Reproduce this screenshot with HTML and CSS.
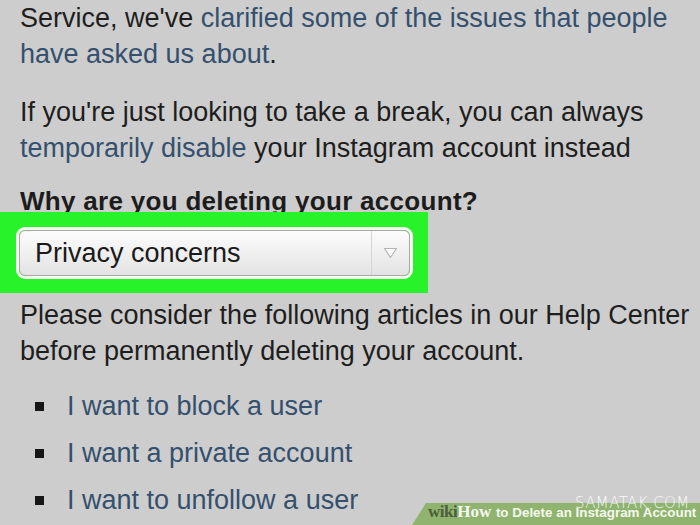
FILE: index.html
```html
<!DOCTYPE html>
<html lang="en">
<head>
<meta charset="utf-8">
<title>Delete Your Account</title>
<link rel="stylesheet" href="styles.css">
</head>
<body>
<main class="page">
  <p class="para">Service, we've <a class="link" href="#">clarified some of the issues that people<br>have asked us about</a>.</p>
  <p class="para">If you're just looking to take a break, you can always<br><a class="link" href="#">temporarily disable</a> your Instagram account instead</p>
  <h2 class="question">Why are you deleting your account?</h2>
  <div class="highlight">
    <div class="select">
      <span class="select-value">Privacy concerns</span>
      <span class="select-arrow">
        <svg width="15" height="12" viewBox="0 0 15 12"><path d="M1.5 1.5 L7.5 10.5 L13.5 1.5 Z" fill="#f9f9f9" stroke="#b4b4b4" stroke-width="1.1" stroke-linejoin="round"/></svg>
      </span>
    </div>
  </div>
  <p class="para para-help">Please consider the following articles in our Help Center<br>before permanently deleting your account.</p>
  <ul class="articles">
    <li><a class="link" href="#">I want to block a user</a></li>
    <li><a class="link" href="#">I want a private account</a></li>
    <li><a class="link" href="#">I want to unfollow a user</a></li>
  </ul>
</main>
<div class="banner">
  <span class="banner-text"><span class="wiki">wiki</span><span class="how">How</span> to Delete an Instagram Account</span>
</div>
<span class="mark">SAMATAK.COM</span>
</body>
</html>
```

FILE: styles.css
```css
html, body {
  margin: 0;
  padding: 0;
}

body {
  width: 700px;
  height: 525px;
  overflow: hidden;
  background: #cdcdcd;
  font-family: "Liberation Sans", Arial, sans-serif;
  color: #1e1e1e;
  position: relative;
}

.page {
  padding: 0 20px;
}

.para {
  margin: 0;
  font-size: 27px;
  line-height: 36px;
  letter-spacing: 0;
  white-space: nowrap;
}

.para + .para {
  margin-top: 22px;
}

.link {
  color: #35506e;
  text-decoration: none;
}

.question {
  margin: 20px 0 0;
  font-size: 26px;
  line-height: 30px;
  font-weight: bold;
  letter-spacing: 0.3px;
  color: #1c1c1c;
  white-space: nowrap;
}

/* bright marker box around the reason picker */
.highlight {
  margin: -4px 0 0 -20px;
  width: 391px;
  padding: 18px 18px 17px 19px;
  background: #27f22a;
  position: relative;
}

.select {
  display: flex;
  align-items: stretch;
  height: 44px;
  border: 1px solid #a9a9a9;
  border-radius: 6px;
  background: linear-gradient(#fcfcfc, #e3e3e3);
  box-shadow: 0 0 0 3px #f4fff2;
}

.select-value {
  flex: 1;
  display: flex;
  align-items: center;
  padding-left: 15px;
  font-size: 27px;
  color: #1a1a1a;
}

.select-arrow {
  width: 37px;
  display: flex;
  align-items: center;
  justify-content: center;
  border-left: 1px solid #d4d4d4;
}

.para-help {
  margin-top: 4px;
}

.articles {
  list-style: none;
  margin: 14px 0 0;
  padding: 0 0 0 15px;
}

.articles li {
  display: flex;
  align-items: center;
  font-size: 27px;
  line-height: 47px;
  letter-spacing: 0;
}

.articles li::before {
  content: "";
  width: 9px;
  height: 9px;
  background: #161616;
  margin-right: 23px;
  flex: none;
}

/* wikiHow title strip */
.banner {
  position: absolute;
  left: 412px;
  bottom: 0;
  width: 288px;
  height: 22px;
  background: #90b46f;
  clip-path: polygon(14px 0, 100% 0, 100% 100%, 0 100%);
}

.banner-text {
  position: absolute;
  left: 16px;
  bottom: 3px;
  white-space: nowrap;
  font-family: "Liberation Sans", Arial, sans-serif;
  font-weight: bold;
  font-size: 13.4px;
  color: #f4f8ee;
}

.wiki {
  font-family: "Liberation Serif", "Times New Roman", serif;
  font-size: 17px;
  color: #4b5e3b;
  letter-spacing: -0.5px;
}

.how {
  font-family: "Liberation Serif", "Times New Roman", serif;
  font-size: 17px;
  color: #f4f8ee;
  margin-right: 1px;
}

/* site watermark laid over the strip */
.mark {
  position: absolute;
  left: 575px;
  top: 494px;
  font-family: "DejaVu Sans", sans-serif;
  font-weight: 200;
  font-size: 15px;
  color: rgba(255, 255, 255, 0.9);
  letter-spacing: 0.4px;
  white-space: nowrap;
}
```
